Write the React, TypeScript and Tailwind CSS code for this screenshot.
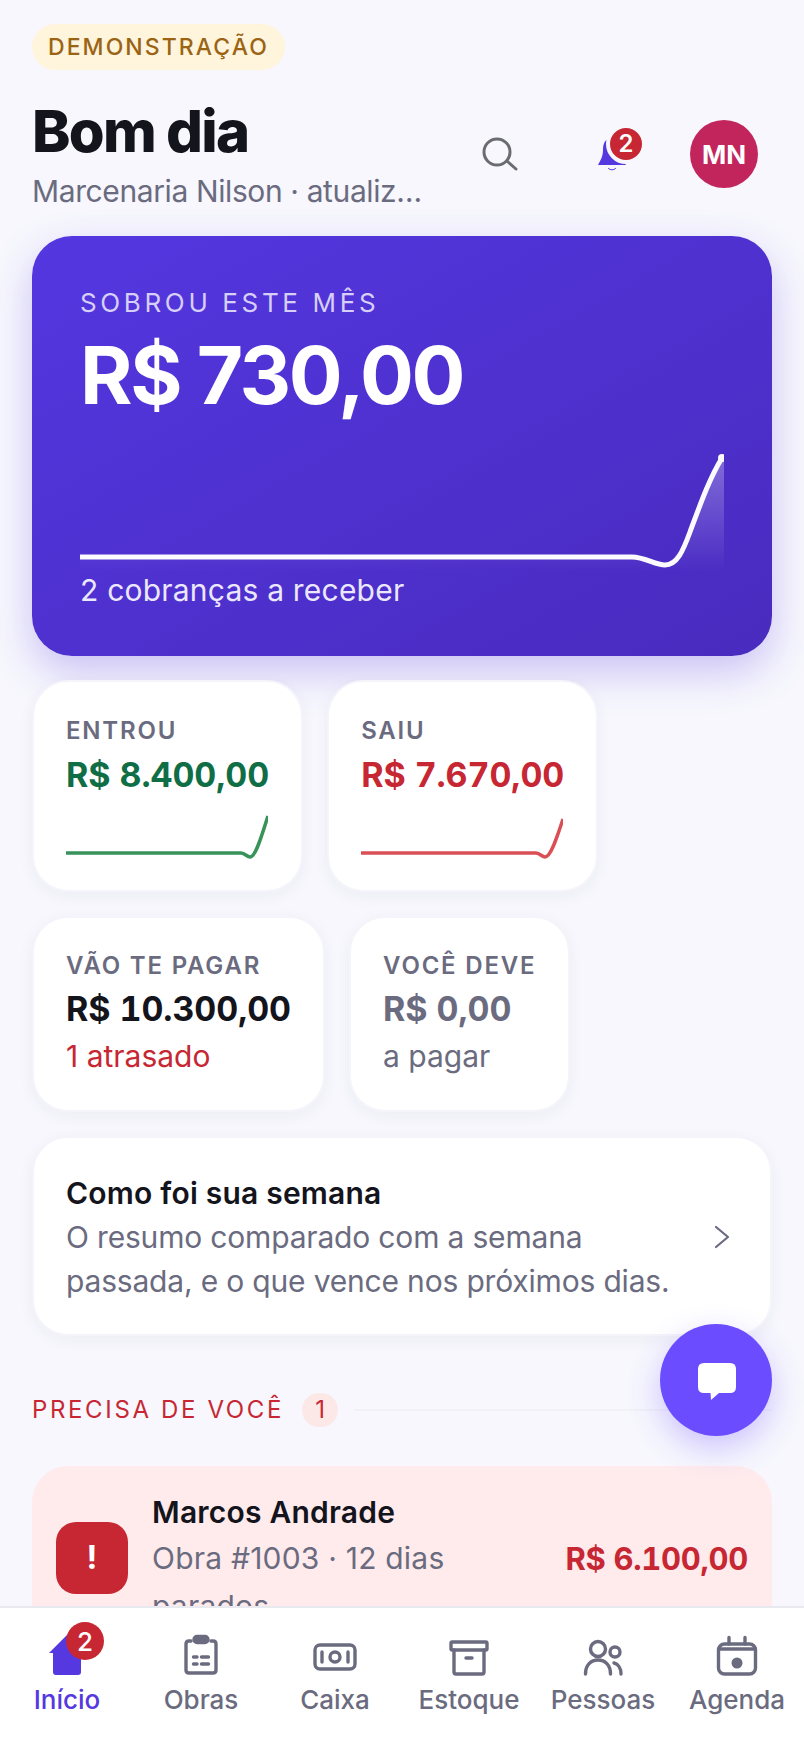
import type { ReactNode } from 'react';

const gray = '#6b6b80';

function MiniSpark({ color, top }: { color: string; top: number }) {
  return (
    <svg width="202" height="46" viewBox="0 0 202 46" className="mt-[16px] block overflow-hidden">
      <path
        d={`M0 40 L175 40 C179 40 181 44 184 44 C190 44 196 ${top + 18} 202 ${top}`}
        fill="none"
        stroke={color}
        strokeWidth="3.5"
        strokeOpacity="0.85"
      />
    </svg>
  );
}

function Card({ children, className = '' }: { children: ReactNode; className?: string }) {
  return (
    <div className={`rounded-[36px] border-2 border-[#f4f4fa] bg-white px-[32px] shadow-[0_4px_16px_rgba(30,30,80,0.05)] ${className}`}>
      {children}
    </div>
  );
}

function Label({ children }: { children: ReactNode }) {
  return <div className="text-[24px] leading-[32px] font-semibold tracking-[0.075em] text-[#6b6b80]">{children}</div>;
}

function Amount({ children, className = '' }: { children: ReactNode; className?: string }) {
  return <div className={`text-[34px] leading-[44px] font-bold tracking-[-0.002em] tabular-nums ${className}`}>{children}</div>;
}

function NavItem({ label, icon, active }: { label: string; icon: ReactNode; active?: boolean }) {
  return (
    <div className="flex flex-col items-center">
      <div className="relative h-[48px] w-[48px]">{icon}</div>
      <span className={`mt-[2px] text-[26px] leading-[36px] font-medium whitespace-nowrap ${active ? 'text-[#5538e0]' : 'text-[#6b6b80]'}`}>
        {label}
      </span>
    </div>
  );
}

function NavSvg({ children }: { children: ReactNode }) {
  return (
    <svg width="48" height="48" viewBox="0 0 48 48" fill="none" stroke={gray} strokeWidth="3.4" strokeLinecap="round" strokeLinejoin="round">
      {children}
    </svg>
  );
}

export default function App() {
  return (
    <div className="relative flex h-[1748px] w-[804px] flex-col overflow-hidden bg-[#f7f7fd] font-['Inter',sans-serif] text-[#14141c]">
      <main className="min-h-0 flex-1 overflow-hidden px-[32px] pt-[24px]">
        <div className="inline-flex h-[46px] items-center rounded-full bg-[#fff4dc] px-[16px] text-[23px] font-medium tracking-[0.09em] text-[#9a6414]">
          DEMONSTRAÇÃO
        </div>

        <header className="mt-[28px] flex items-start pr-[4px]">
          <div className="min-w-0 flex-1">
            <h1 className="text-[58px] leading-[66px] font-extrabold tracking-[-0.03em] text-[#14141c]">Bom dia</h1>
            <p className="mt-[6px] mb-[1px] truncate text-[30px] leading-[42px] tracking-[-0.013em] text-[#6b6b80]">Marcenaria Nilson · atualizado agora</p>
          </div>
          <div className="mt-[12px] ml-[24px] flex items-center gap-[24px]">
            <div className="flex h-[88px] w-[88px] items-center justify-center">
              <svg width="44" height="44" viewBox="0 0 44 44" fill="none" stroke="#6b6b73" strokeWidth="3" strokeLinecap="round">
                <circle cx="19" cy="20" r="13" />
                <path d="M29 29 L38 37" />
              </svg>
            </div>
            <div className="relative flex h-[88px] w-[88px] items-center justify-center">
              <svg width="44" height="44" viewBox="0 0 44 44" fill="#5538e0">
                <path d="M22 6 C15 6 13 12 13 18 C13 25 10 29 8 33 L36 33 C34 29 31 25 31 18 C31 12 29 6 22 6 Z" />
                <path d="M18.5 36.5 Q22 39.5 25.5 36.5" fill="none" stroke="#5538e0" strokeWidth="1" strokeLinecap="round" />
              </svg>
              <span className="absolute top-[14px] left-[38px] flex h-[40px] w-[40px] items-center justify-center rounded-full border-[4px] border-[#f7f7fd] bg-[#c62733] text-[24px] font-semibold text-white">
                2
              </span>
            </div>
            <div className="flex h-[88px] w-[88px] items-center justify-center">
              <div className="flex h-[68px] w-[68px] items-center justify-center rounded-full bg-[#c2255c] text-[26px] font-bold text-white">MN</div>
            </div>
          </div>
        </header>

        <section className="mt-[23px] h-[420px] rounded-[40px] bg-gradient-to-br from-[#5437e0] to-[#492bbf] pt-[49px] shadow-[0_16px_40px_rgba(85,56,224,0.28)]">
          <div className="px-[48px]">
            <div className="text-[26px] leading-[36px] tracking-[0.14em] text-[#d6cff8]">SOBROU ESTE MÊS</div>
            <div className="mt-[6px] text-[80px] leading-[96px] font-bold tracking-[-0.03em] text-white">R$ 730,00</div>
          </div>
          <svg width="644" height="124" viewBox="0 0 644 124" className="mt-[24px] ml-[48px] block overflow-hidden">
            <defs>
              <linearGradient id="heroFill" x1="0" y1="0" x2="0" y2="1">
                <stop offset="0" stopColor="#fff" stopOpacity="0.3" />
                <stop offset="1" stopColor="#fff" stopOpacity="0" />
              </linearGradient>
            </defs>
            <path d="M0 110 L552 110 C565 110 575 118 585 118 C597 118 603 104 610 85 C620 58 630 30 644 9 L644 124 L0 124 Z" fill="url(#heroFill)" />
            <path d="M0 110 L552 110 C565 110 575 118 585 118 C597 118 603 104 610 85 C620 58 630 30 642 11" fill="none" stroke="#fbfaff" strokeWidth="5" />
            <circle cx="642" cy="11" r="4" fill="#fbfaff" />
          </svg>
          <div className="mt-[-2px] px-[48px] text-[30px] leading-[42px] tracking-[0.007em] text-[#ebe7fc]">2 cobranças a receber</div>
        </section>

        <div className="mt-[24px] flex flex-wrap gap-[24px]">
          <Card className="pt-[33px] pb-[31px]">
            <Label>ENTROU</Label>
            <Amount className="mt-[6px] text-[#0f6e45]">R$ 8.400,00</Amount>
            <MiniSpark color="#15803d" top={3} />
          </Card>
          <Card className="pt-[33px] pb-[31px]">
            <Label>SAIU</Label>
            <Amount className="mt-[6px] text-[#c62733]">R$ 7.670,00</Amount>
            <MiniSpark color="#d32f38" top={6} />
          </Card>
        </div>

        <div className="mt-[24px] flex gap-[24px]">
          <Card className="pt-[32px] pb-[33px]">
            <Label>VÃO TE PAGAR</Label>
            <Amount className="mt-[5px] text-[#14141c]">R$ 10.300,00</Amount>
            <div className="mt-[4px] text-[30px] leading-[42px] text-[#c62733]">1 atrasado</div>
          </Card>
          <Card className="pt-[32px] pb-[33px]">
            <Label>VOCÊ DEVE</Label>
            <Amount className="mt-[5px] text-[#6b6b80]">R$ 0,00</Amount>
            <div className="mt-[4px] text-[30px] leading-[42px] text-[#6b6b80]">a pagar</div>
          </Card>
        </div>

        <Card className="mt-[24px] flex h-[200px] items-center justify-between pt-[2px]">
          <div>
            <div className="text-[30px] leading-[44px] font-semibold tracking-[0.007em] text-[#14141c]">Como foi sua semana</div>
            <div className="text-[30px] leading-[44px] tracking-[-0.006em] text-[#6b6b80]">
              O resumo comparado com a semana
              <br />
              passada, e o que vence nos próximos dias.
            </div>
          </div>
          <svg width="16" height="24" viewBox="0 0 16 24" fill="none" stroke="#6b6b80" strokeWidth="2.2" strokeLinecap="round" strokeLinejoin="round" className="mr-[8px]">
            <path d="M2 2 L14 12 L2 22" />
          </svg>
        </Card>

        <div className="mt-[56px] flex items-center">
          <span className="text-[24px] leading-[36px] tracking-[0.11em] text-[#c62733]">PRECISA DE VOCÊ</span>
          <span className="ml-[18px] flex h-[34px] w-[36px] items-center justify-center rounded-full bg-[#fde8e8] text-[24px] text-[#c62733]">1</span>
          <div className="ml-[16px] h-[2px] flex-1 bg-[#f1f1f7]" />
        </div>

        <div className="mt-[38px] flex items-center rounded-[36px] bg-[#ffebec] pt-[24px] pr-[24px] pb-[16px] pl-[24px]">
          <div className="-mt-[4px] flex h-[72px] w-[72px] shrink-0 items-center justify-center rounded-[20px] bg-[#c62733] text-[32px] font-bold text-white">!</div>
          <div className="ml-[24px] w-[320px]">
            <div className="text-[30px] leading-[44px] font-semibold tracking-[0.007em] text-[#14141c]">Marcos Andrade</div>
            <div className="text-[30px] leading-[48px] tracking-[0.007em] text-[#6b6b80]">Obra #1003 · 12 dias parados</div>
          </div>
          <div className="-mt-[2px] ml-auto text-[31px] leading-[44px] font-bold tracking-[-0.01em] tabular-nums text-[#c62733]">R$ 6.100,00</div>
        </div>
      </main>

      <nav className="grid h-[142px] shrink-0 grid-cols-6 border-t-2 border-[#e9e9f0] bg-white pt-[24px]">
        <NavItem
          label="Início"
          active
          icon={
            <>
              <svg width="48" height="48" viewBox="0 0 48 48" fill="#5538e0">
                <path d="M24 3 L6 21 L10 21 L10 40 Q10 43 13 43 L35 43 Q38 43 38 40 L38 21 L42 21 Z" />
              </svg>
              <span className="absolute top-[-10px] left-[23px] flex h-[38px] w-[38px] items-center justify-center rounded-full bg-[#c62733] text-[26px] font-medium text-white">2</span>
            </>
          }
        />
        <NavItem
          label="Obras"
          icon={
            <NavSvg>
              <path d="M14 9 L12 9 Q9 9 9 12 L9 38 Q9 41 12 41 L36 41 Q39 41 39 38 L39 12 Q39 9 36 9 L34 9" />
              <rect x="17" y="4.5" width="14" height="6" rx="3" fill={gray} />
              <path d="M16.5 25 L20 25 M24.5 25 L31.5 25 M16.5 32 L20 32 M24.5 32 L31.5 32" />
            </NavSvg>
          }
        />
        <NavItem
          label="Caixa"
          icon={
            <NavSvg>
              <rect x="4" y="13" width="40" height="24" rx="5" />
              <circle cx="24" cy="25" r="5" />
              <path d="M11 20 L11 30 M37 20 L37 30" />
            </NavSvg>
          }
        />
        <NavItem
          label="Estoque"
          icon={
            <NavSvg>
              <rect x="6" y="10" width="36" height="8" rx="1.2" />
              <path d="M9 18 L9 40 Q9 42 11 42 L37 42 Q39 42 39 40 L39 18" />
              <path d="M21 26 L27 26" />
            </NavSvg>
          }
        />
        <NavItem
          label="Pessoas"
          icon={
            <NavSvg>
              <circle cx="19" cy="17" r="7.5" />
              <circle cx="36" cy="20" r="5" />
              <path d="M6.5 42 C6.5 33 12 28 19 28 C26 28 31.5 33 31.5 42" />
              <path d="M35 31 C39 32 42 36 42 42" />
            </NavSvg>
          }
        />
        <NavItem
          label="Agenda"
          icon={
            <NavSvg>
              <rect x="5.5" y="12" width="37" height="30" rx="6" />
              <path d="M5.5 17 L42.5 17 M16 5.5 L16 12 M32 5.5 L32 12" />
              <circle cx="24" cy="31" r="5.5" fill={gray} stroke="none" />
            </NavSvg>
          }
        />
      </nav>

      <button className="absolute top-[1324px] left-[660px] flex h-[112px] w-[112px] items-center justify-center rounded-full bg-[#6b4dff] shadow-[0_12px_32px_rgba(107,77,255,0.3)]">
        <svg width="40" height="40" viewBox="0 0 40 40" fill="#fff">
          <path d="M8 3 L34 3 Q40 3 40 9 L40 27 Q40 33 34 33 L23 33 L15 40 L14.5 33 L8 33 Q2 33 2 27 L2 9 Q2 3 8 3 Z" />
        </svg>
      </button>
    </div>
  );
}
